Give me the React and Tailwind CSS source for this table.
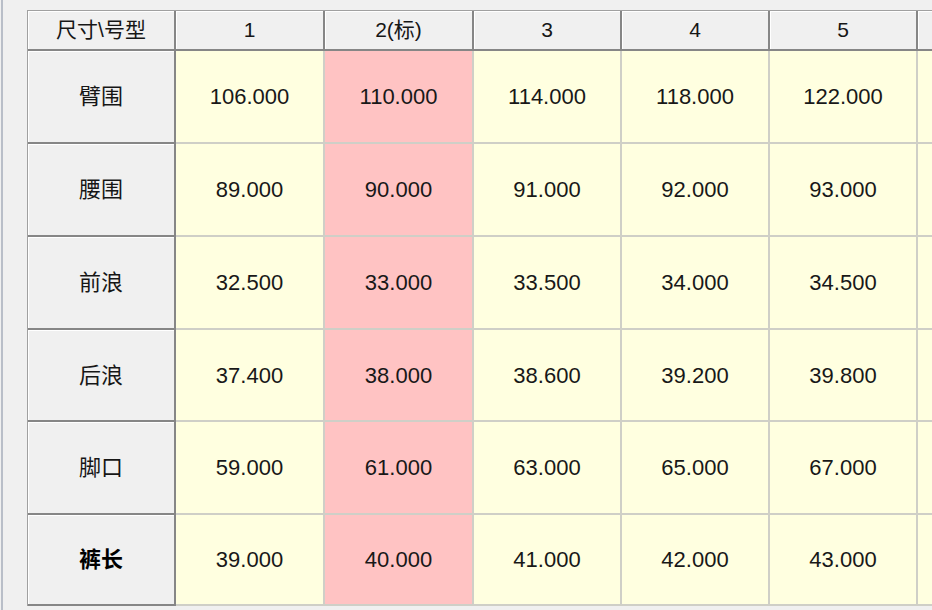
const columns = ['1', '2(标)', '3', '4', '5', ''];

const rows = [
  { name: '臂围', values: ['106.000', '110.000', '114.000', '118.000', '122.000'], h: 'h-[93px]' },
  { name: '腰围', values: ['89.000', '90.000', '91.000', '92.000', '93.000'], h: 'h-[93px]' },
  { name: '前浪', values: ['32.500', '33.000', '33.500', '34.000', '34.500'], h: 'h-[93px]' },
  { name: '后浪', values: ['37.400', '38.000', '38.600', '39.200', '39.800'], h: 'h-[92px]' },
  { name: '脚口', values: ['59.000', '61.000', '63.000', '65.000', '67.000'], h: 'h-[93px]' },
  { name: '裤长', values: ['39.000', '40.000', '41.000', '42.000', '43.000'], h: 'h-[91px]', bold: true },
];

const widths = ['w-[149px]', 'w-[149px]', 'w-[148px]', 'w-[148px]', 'w-[148px]', 'w-[60px]'];

const font = { fontFamily: '"Liberation Sans", "Noto Sans CJK SC", sans-serif' };

function HeaderCell({ children, className = '' }) {
  return (
    <div
      className={`shrink-0 flex items-center justify-center bg-[#f0f0f0] border-r-2 border-b-2 border-[#868686] shadow-[inset_1px_1px_0_#ffffff] text-[21px] text-[#161616] ${className}`}
    >
      {children}
    </div>
  );
}

export default function App() {
  return (
    <div className="w-[932px] h-[610px] bg-[#f0f0f0] flex overflow-hidden" style={font}>
      <div className="w-[27px] shrink-0 pl-px">
        <div className="h-full border-l-2 border-[#b9bec8]" />
      </div>
      <div className="pt-[10px] flex-1 overflow-hidden">
        <div className="border-t border-l border-[#a0a0a0] w-[1000px]">
          {/* header row */}
          <div className="flex h-[40px]">
            <HeaderCell className="w-[148px]">尺寸\号型</HeaderCell>
            {columns.map((c, i) => (
              <HeaderCell key={i} className={widths[i]}>
                {c}
              </HeaderCell>
            ))}
          </div>
          {rows.map((r) => (
            <div key={r.name} className={`flex ${r.h}`}>
              <HeaderCell className={`w-[148px] text-[22px] ${r.bold ? 'font-bold text-black' : ''}`}>
                {r.name}
              </HeaderCell>
              {r.values.map((v, i) => (
                <div
                  key={i}
                  className={`shrink-0 ${widths[i]} flex items-center justify-center border-r-2 border-b-2 border-[#cfcfc7] text-[22px] text-[#181818] ${
                    i === 1 ? 'bg-[#ffc3c3]' : 'bg-[#ffffe0]'
                  }`}
                >
                  {v}
                </div>
              ))}
              <div className="shrink-0 w-[60px] bg-[#ffffe0] border-b-2 border-[#cfcfc7]" />
            </div>
          ))}
        </div>
      </div>
    </div>
  );
}
